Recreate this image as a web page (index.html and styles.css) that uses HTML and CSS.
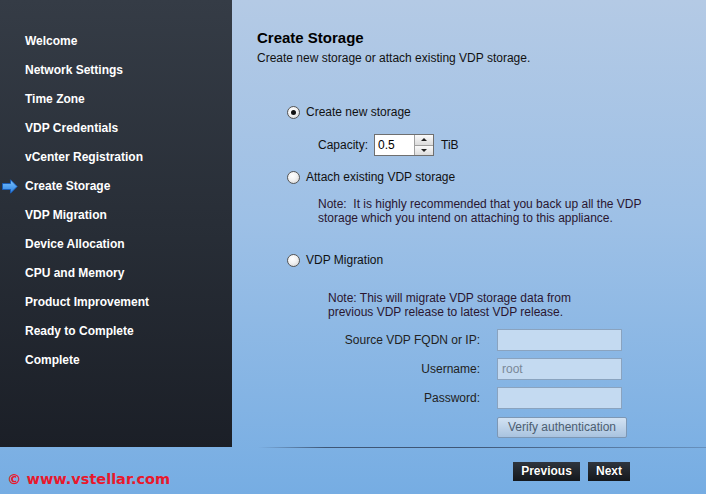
FILE: index.html
```html
<!DOCTYPE html>
<html>
<head>
<meta charset="utf-8">
<link rel="stylesheet" href="styles.css">
</head>
<body>
<div class="page">
  <div class="top">
    <nav class="sidebar">
      <div class="item">Welcome</div>
      <div class="item">Network Settings</div>
      <div class="item">Time Zone</div>
      <div class="item">VDP Credentials</div>
      <div class="item">vCenter Registration</div>
      <div class="item current">
        <svg class="arrow" width="17" height="15" viewBox="0 0 17 15">
          <defs>
            <linearGradient id="ag" x1="0" y1="0" x2="0" y2="1">
              <stop offset="0" stop-color="#7cc4ff"/>
              <stop offset="1" stop-color="#2a7fe0"/>
            </linearGradient>
          </defs>
          <path d="M1.5 4.5 H9.5 V0.8 L16.2 7.5 L9.5 14.2 V10.5 H1.5 Z" fill="url(#ag)" stroke="#1a5cb5" stroke-width="1"/>
        </svg>
        Create Storage
      </div>
      <div class="item">VDP Migration</div>
      <div class="item">Device Allocation</div>
      <div class="item">CPU and Memory</div>
      <div class="item">Product Improvement</div>
      <div class="item">Ready to Complete</div>
      <div class="item">Complete</div>
    </nav>
    <main class="main">
      <h1 class="title">Create Storage</h1>
      <p class="subtitle">Create new storage or attach existing VDP storage.</p>

      <div class="option opt1">
        <span class="radio checked"></span>
        <span>Create new storage</span>
      </div>
      <div class="capacity">
        <span>Capacity:</span>
        <span class="spin">
          <span class="spin-value">0.5</span>
          <span class="spin-btns">
            <span class="spin-btn"><span class="tri-up"></span></span>
            <span class="spin-btn"><span class="tri-down"></span></span>
          </span>
        </span>
        <span>TiB</span>
      </div>

      <div class="option opt2">
        <span class="radio"></span>
        <span>Attach existing VDP storage</span>
      </div>
      <p class="note note1">Note:&nbsp; It is highly recommended that you back up all the VDP<br>storage which you intend on attaching to this appliance.</p>

      <div class="option opt3">
        <span class="radio"></span>
        <span>VDP Migration</span>
      </div>
      <p class="note note2">Note: This will migrate VDP storage data from<br>previous VDP release to latest VDP release.</p>

      <div class="form">
        <label class="flabel">Source VDP FQDN or IP:</label>
        <span class="field"></span>
        <label class="flabel">Username:</label>
        <span class="field">root</span>
        <label class="flabel">Password:</label>
        <span class="field"></span>
        <span></span>
        <span class="verify">Verify authentication</span>
      </div>
    </main>
  </div>
  <div class="footer">
    <div class="rule"></div>
    <div class="footrow">
      <div class="mark">© www.vstellar.com</div>
      <div class="buttons">
        <span class="btn prev">Previous</span>
        <span class="btn next">Next</span>
      </div>
    </div>
  </div>
</div>
</body>
</html>
```
FILE: styles.css
```css
html, body {
  margin: 0;
  padding: 0;
}
body {
  width: 706px;
  height: 494px;
  overflow: hidden;
  font-family: "Liberation Sans", Arial, sans-serif;
  font-size: 12px;
  color: #111;
}
.page {
  width: 706px;
  height: 494px;
  display: flex;
  flex-direction: column;
  background: linear-gradient(to bottom, #b4cae5 0%, #9dc0e6 45%, #76ade3 100%);
}
.top {
  display: flex;
  height: 447px;
}
.sidebar {
  width: 232px;
  flex: none;
  background: linear-gradient(to bottom, #353c46 0%, #282e37 50%, #1b1f27 100%);
  padding-top: 27px;
  box-sizing: border-box;
}
.item {
  height: 29px;
  line-height: 29px;
  padding-left: 25px;
  color: #fff;
  font-weight: bold;
  font-size: 12px;
  position: relative;
}
.arrow {
  position: absolute;
  left: 1px;
  top: 7px;
}
.main {
  flex: 1;
  padding-left: 25px;
  padding-top: 29px;
}
.title {
  margin: 0;
  font-size: 15px;
  line-height: 18px;
  font-weight: bold;
  color: #000;
}
.subtitle {
  margin: 4px 0 0 0;
  line-height: 14px;
  color: #111;
}
.option {
  display: flex;
  align-items: center;
  gap: 6px;
  height: 16px;
  margin-left: 30px;
  color: #111;
}
.opt1 { margin-top: 39px; }
.opt2 { margin-top: 13px; }
.opt3 { margin-top: 27px; }
.radio {
  width: 11px;
  height: 11px;
  border-radius: 50%;
  border: 1px solid #555;
  background: radial-gradient(circle at 40% 35%, #ffffff 0%, #f2f2f2 45%, #cfcfcf 100%);
  position: relative;
  flex: none;
}
.radio.checked::after {
  content: "";
  position: absolute;
  left: 3px;
  top: 3px;
  width: 5px;
  height: 5px;
  border-radius: 50%;
  background: #111;
}
.capacity {
  display: flex;
  align-items: center;
  height: 22px;
  margin-top: 14px;
  margin-left: 61px;
  gap: 0;
}
.capacity > span:first-child { margin-right: 6px; }
.capacity > span:last-child { margin-left: 7px; }
.spin {
  display: flex;
  width: 60px;
  height: 22px;
  box-sizing: border-box;
  border: 1px solid #6f6f6f;
  background: #fff;
}
.spin-value {
  flex: 1;
  padding-left: 3px;
  line-height: 20px;
  font-size: 12px;
  color: #000;
}
.spin-btns {
  width: 18px;
  display: flex;
  flex-direction: column;
  border-left: 1px solid #a0a0a0;
}
.spin-btn {
  flex: 1;
  display: flex;
  align-items: center;
  justify-content: center;
  background: linear-gradient(to bottom, #fafafa, #dcdcdc);
}
.spin-btn + .spin-btn { border-top: 1px solid #a0a0a0; }
.tri-up {
  width: 0; height: 0;
  border-left: 3px solid transparent;
  border-right: 3px solid transparent;
  border-bottom: 3px solid #222;
}
.tri-down {
  width: 0; height: 0;
  border-left: 3px solid transparent;
  border-right: 3px solid transparent;
  border-top: 3px solid #222;
}
.note {
  margin: 0;
  line-height: 14px;
  color: #2a1630;
}
.note1 { margin-top: 12px; margin-left: 61px; }
.note2 { margin-top: 23px; margin-left: 71px; }
.form {
  display: grid;
  grid-template-columns: 160px 125px;
  column-gap: 17px;
  row-gap: 7px;
  grid-auto-rows: 22px;
  margin-top: 10px;
  margin-left: 63px;
}
.flabel {
  text-align: right;
  line-height: 22px;
  color: #222;
}
.field {
  box-sizing: border-box;
  height: 22px;
  border: 1px solid #8aa3bf;
  background: #c4daf1;
  padding-left: 4px;
  line-height: 20px;
  color: #7a8898;
}
.verify {
  box-sizing: border-box;
  width: 130px;
  height: 21px;
  margin-top: 1px;
  border: 1px solid #7d97b4;
  border-radius: 2px;
  background: linear-gradient(to bottom, #d2e2f3, #a9c3df);
  color: #4d5e71;
  text-align: center;
  line-height: 19px;
}
.footer {
  flex: 1;
  display: flex;
  flex-direction: column;
}
.rule {
  height: 1px;
  margin-left: 258px;
  background: linear-gradient(to right, rgba(60,80,110,0) 0%, #3e5676 15%, #3e5676 45%, rgba(62,86,118,0.35) 100%);
}
.footrow {
  display: flex;
  align-items: flex-start;
  justify-content: space-between;
  padding: 14px 76px 0 7px;
}
.mark {
  font-family: "DejaVu Sans", Verdana, sans-serif;
  font-weight: bold;
  font-size: 14.5px;
  color: #e8182c;
  margin-top: 9px;
}
.buttons {
  display: flex;
  gap: 8px;
}
.btn {
  box-sizing: border-box;
  height: 19px;
  line-height: 19px;
  text-align: center;
  background: linear-gradient(to bottom, #2f353e, #14181d);
  color: #fff;
  font-weight: bold;
  font-size: 12px;
  text-shadow: 0 0 1px #000;
}
.prev { width: 67px; }
.next { width: 42px; }
```
